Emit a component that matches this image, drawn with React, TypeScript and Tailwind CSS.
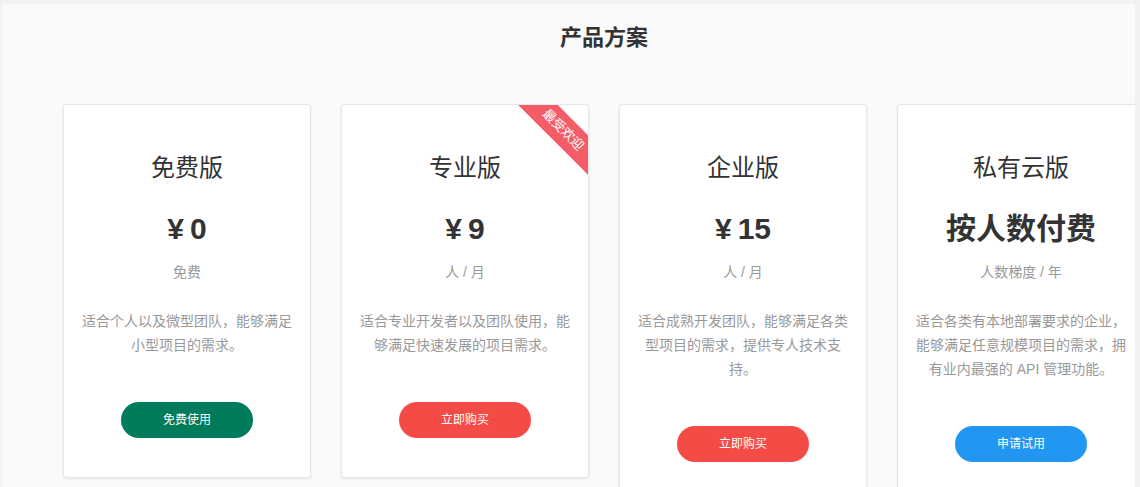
const plans = [
  {
    name: '免费版',
    price: '0',
    unit: '免费',
    desc: '适合个人以及微型团队，能够满足小型项目的需求。',
    button: '免费使用',
    color: 'bg-[#007b5b]',
  },
  {
    name: '专业版',
    price: '9',
    unit: '人 / 月',
    desc: '适合专业开发者以及团队使用，能够满足快速发展的项目需求。',
    button: '立即购买',
    color: 'bg-[#f54b46]',
    hot: true,
  },
  {
    name: '企业版',
    price: '15',
    unit: '人 / 月',
    desc: '适合成熟开发团队，能够满足各类型项目的需求，提供专人技术支持。',
    button: '立即购买',
    color: 'bg-[#f54b46]',
  },
  {
    name: '私有云版',
    text: '按人数付费',
    unit: '人数梯度 / 年',
    desc: '适合各类有本地部署要求的企业，能够满足任意规模项目的需求，拥有业内最强的 API 管理功能。',
    button: '申请试用',
    color: 'bg-[#2297f2]',
  },
]

function PlanCard({ plan }: { plan: (typeof plans)[number] }) {
  return (
    <div className="relative w-[248px] shrink-0 overflow-hidden rounded-[3px] border border-[#e6e6e6] bg-white pt-12 pb-[39px] px-[18px] text-center shadow-[0_1px_3px_rgba(0,0,0,0.08)]">
      {plan.hot && (
        <div className="absolute top-[11px] right-[-25px] flex h-[28px] w-[100px] rotate-45 items-center justify-center bg-[#f45c68] text-[13px] text-white">
          最受欢迎
        </div>
      )}
      <h3 className="text-[24px] leading-[30px] text-[#333]">{plan.name}</h3>
      <div className="mt-[26px] text-[30px] font-bold leading-[40px] text-[#333]">
        {plan.text ?? (
          <>
            <span className="mr-[6px]">¥</span>
            {plan.price}
          </>
        )}
      </div>
      <div className="mt-[13px] text-[14px] leading-[20px] text-[#999]">{plan.unit}</div>
      <p className="mt-[27px] text-[14px] leading-[24px] text-[#999]">{plan.desc}</p>
      <button
        className={`mx-auto mt-[45px] flex h-[36px] w-[132px] items-center justify-center rounded-full text-[12px] text-white ${plan.color}`}
      >
        {plan.button}
      </button>
    </div>
  )
}

export default function App() {
  return (
    <div
      className="h-[487px] overflow-hidden bg-[#f2f2f2] pt-[4px] pl-[3px] pr-[5px]"
      style={{ fontFamily: '"Liberation Sans", "Noto Sans CJK SC", sans-serif' }}
    >
      <div className="h-full overflow-hidden bg-[#fafafa]">
        <div className="w-[1202px] shrink-0 px-[60px] pt-[19px]">
          <h2 className="text-center text-[22px] font-bold leading-[30px] text-[#333]">产品方案</h2>
          <div className="mt-[51px] flex items-start gap-[30px]">
            {plans.map((p) => (
              <PlanCard key={p.name} plan={p} />
            ))}
          </div>
        </div>
      </div>
    </div>
  )
}
